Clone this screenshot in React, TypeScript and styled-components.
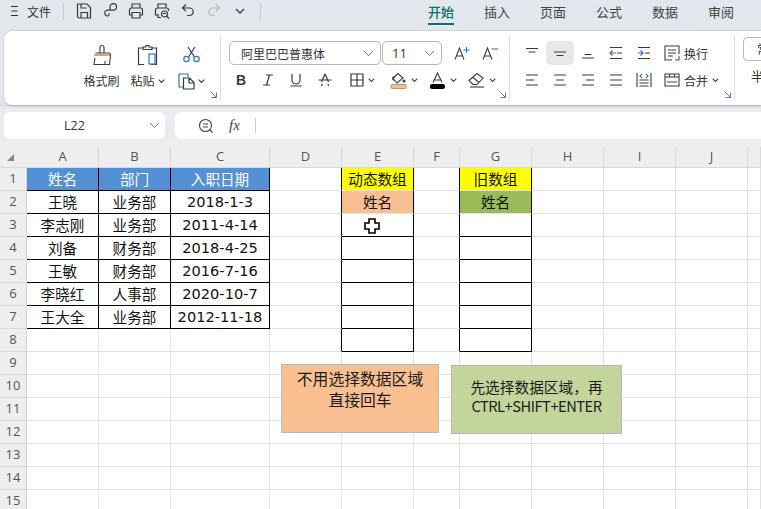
import React from "react";
import styled, { createGlobalStyle } from "styled-components";

const CJK = `"Noto Sans CJK SC", "Noto Sans", sans-serif`;
const INK = "#3a3a3a";
const BLUE = "#2f6fd6";

const Global = createGlobalStyle`
  html, body { margin: 0; padding: 0; background: #fff; }
  #root { width: 761px; height: 509px; overflow: hidden; }
  * { box-sizing: border-box; }
`;

const Page = styled.div`
  width: 761px;
  height: 509px;
  overflow: hidden;
  position: relative;
  display: flex;
  flex-direction: column;
  font-family: ${CJK};
  color: #222;
  background: #fff;
`;

const TitleBar = styled.div`
  height: 31px;
  flex: none;
  display: flex;
  align-items: center;
  background: #e2e6ed;
  padding: 0 0 9px 11px;
`;
const FileButton = styled.div`
  display: flex;
  align-items: center;
  gap: 9px;
  width: 52px;
  font-size: 12px;
  color: #333;
`;
const VBar = styled.span<{ $h?: number }>`
  width: 1px;
  height: ${(p) => p.$h ?? 17}px;
  background: #c6cad1;
  flex: none;
`;
const QuickIcons = styled.div`
  display: flex;
  align-items: center;
  width: 196px;
  padding-left: 7px;
`;
const QuickIcon = styled.span`
  width: 26px;
  display: flex;
  justify-content: center;
`;
const Tabs = styled.div`
  display: flex;
  align-self: flex-start;
  gap: 30px;
  margin-left: 167px;
`;
const Tab = styled.div<{ $on?: boolean }>`
  width: 26px;
  height: 25px;
  font-size: 13px;
  line-height: 23px;
  white-space: nowrap;
  font-weight: ${(p) => (p.$on ? 500 : 400)};
  color: ${(p) => (p.$on ? "#0e6f6c" : "#444")};
  border-bottom: ${(p) => (p.$on ? "2px solid #0e6f6c" : "none")};
`;

const Ribbon = styled.div`
  height: 74px;
  flex: none;
  background: #e2e6ed;
  padding-left: 4px;
`;
const RibbonCard = styled.div`
  height: 74px;
  background: #fff;
  border-radius: 8px 0 0 8px;
  box-shadow: 0 1px 2px rgba(90, 100, 120, 0.35), 0 -1px 0 #d3d6dc;
  display: flex;
  position: relative;
`;
const Group = styled.div<{ $w: number }>`
  position: relative;
  width: ${(p) => p.$w}px;
  flex: none;
  height: 100%;
  border-right: 1px solid #dcdfe4;
`;
const GroupFrame = styled.div`
  display: flex;
  height: 66px;
  margin-top: 4px;
`;
const PasteGroup = styled(Group)`
  padding-left: 76px;
  display: flex;
`;
const BigTool = styled.div<{ $w: number }>`
  width: ${(p) => p.$w}px;
  display: flex;
  flex-direction: column;
  align-items: center;
  font-size: 12px;
  color: #333;
  padding-top: 6px;
`;
const BigIconSlot = styled.div`
  height: 27px;
  display: flex;
  align-items: center;
  justify-content: center;
`;
const BigLabel = styled.div`
  margin-top: 4px;
  height: 18px;
  line-height: 18px;
  display: flex;
  align-items: center;
  gap: 3px;
  white-space: nowrap;
`;
const FontGroup = styled(Group)`
  padding: 6px 0 0 7px;
`;
const SelectRow = styled.div<{ $inset?: number }>`
  display: flex;
  align-items: center;
  height: 24px;
  margin-left: ${(p) => p.$inset ?? 0}px;
`;
const SelectBox = styled.div<{ $w: number; $pl: number }>`
  width: ${(p) => p.$w}px;
  height: 24px;
  border: 1px solid #b5b8bd;
  border-radius: 5px;
  background: #fff;
  display: flex;
  align-items: center;
  justify-content: space-between;
  padding: 0 6px 0 ${(p) => p.$pl}px;
  font-size: 12px;
  color: #333;
  margin-right: 1px;
`;
const SizeValue = styled.span`
  font-family: "Open Sans", sans-serif;
  font-size: 13px;
`;
const GrowTools = styled.div`
  display: flex;
  margin-left: 5px;
`;
const ToolRow = styled.div`
  display: flex;
  align-items: center;
  height: 24px;
  margin-top: 3px;
`;
const Tool = styled.span<{ $w: number; $on?: boolean }>`
  width: ${(p) => p.$w}px;
  height: 24px;
  flex: none;
  display: flex;
  align-items: center;
  justify-content: center;
  gap: 4px;
  border-radius: 5px;
  background: ${(p) => (p.$on ? "#e8e8e8" : "transparent")};
`;
const GlyphB = styled.span`
  font-family: "Liberation Sans", sans-serif;
  font-size: 14px;
  font-weight: 700;
  color: ${INK};
`;
const AlignGroup = styled(Group)`
  padding: 6px 0 0 8px;
`;
const TextTool = styled.div`
  display: flex;
  align-items: center;
  gap: 4px;
  font-size: 12px;
  color: #333;
  margin-left: 6px;
  white-space: nowrap;
`;
const Launcher = styled.svg`
  position: absolute;
  right: 3px;
  bottom: 3px;
`;
const NextGroup = styled.div`
  padding: 6px 0 0 8px;
  overflow: hidden;
  flex: 1;
`;
const ClipBox = styled.div`
  width: 40px;
  height: 24px;
  border: 1px solid #b5b8bd;
  border-right: 0;
  border-radius: 5px 0 0 5px;
  font-size: 12px;
  line-height: 22px;
  padding-left: 13px;
  color: #333;
`;
const ClipText = styled.div`
  font-size: 13px;
  margin-top: 5px;
  padding-left: 8px;
  color: #333;
`;

const FormulaBar = styled.div`
  height: 35px;
  flex: none;
  background: #e9ecf1;
  padding: 7px 0 1px 4px;
  display: flex;
  gap: 10px;
  box-shadow: inset 0 3px 3px -2px #cfd3da;
`;
const NameBox = styled.div`
  width: 161px;
  height: 27px;
  background: #fff;
  border-radius: 6px;
  display: flex;
  align-items: center;
  justify-content: space-between;
  padding: 0 5px 0 60px;
  font-family: "Open Sans", sans-serif;
  font-size: 12.5px;
  color: #333;
`;
const FxBox = styled.div`
  flex: 1;
  height: 27px;
  background: #fff;
  border-radius: 6px 0 0 6px;
  display: flex;
  align-items: center;
  padding-left: 23px;
`;
const FxGlyph = styled.span`
  font-family: "Liberation Serif", serif;
  font-style: italic;
  font-size: 15px;
  color: #444;
  margin: 0 10px 0 15px;
  width: 16px;
`;

const Sheet = styled.div`
  display: grid;
  grid-template-columns: 27px 72px 72px 99px 72px 72px 46px 72px 72px 72px 72px 13px;
  grid-template-rows: 28px repeat(15, 23px);
  flex: none;
`;
const ColHead = styled.div`
  background: #eeeeee;
  border-bottom: 1px solid #d8d8d8;
  padding-top: 7px;
  position: relative;
`;
const ColLabel = styled.div`
  height: 20px;
  border-right: 1px solid #d9d9d9;
  text-align: center;
  font-family: "Open Sans", sans-serif;
  font-size: 13px;
  line-height: 19px;
  color: #555;
`;
const Corner = styled.svg`
  position: absolute;
  left: 7px;
  top: 14px;
`;
const RowHead = styled.div`
  background: #eeeeee;
  border-right: 1px solid #d4d4d4;
  border-bottom: 1px solid #d9d9d9;
  font-family: "Open Sans", sans-serif;
  font-size: 13px;
  line-height: 21px;
  text-align: center;
  color: #555;
`;
const Cell = styled.div<{ $bg?: string; $fg?: string; $r?: boolean; $b?: boolean; $date?: boolean }>`
  background: ${(p) => p.$bg ?? "#fff"};
  color: ${(p) => p.$fg ?? "#111"};
  border-right: 1px solid ${(p) => (p.$r ? "#000" : "#e1e1e1")};
  border-bottom: 1px solid ${(p) => (p.$b ? "#000" : "#e1e1e1")};
  font-family: ${(p) => (p.$date ? `"DejaVu Sans", sans-serif` : CJK)};
  font-size: 14.6px;
  line-height: 22px;
  text-align: center;
  white-space: nowrap;
  overflow: hidden;
`;

const NoteBox = styled.div<{ $bg: string; $x: number; $y: number; $w: number; $pt: number; $fs: number; $lh: number }>`
  position: absolute;
  left: ${(p) => p.$x}px;
  top: ${(p) => p.$y}px;
  width: ${(p) => p.$w}px;
  height: 69px;
  background: ${(p) => p.$bg};
  border: 1px solid #b3b9bd;
  padding-top: ${(p) => p.$pt}px;
  font-size: ${(p) => p.$fs}px;
  line-height: ${(p) => p.$lh}px;
  text-align: center;
  color: #1c1c1c;
`;
const Keys = styled.span`
  letter-spacing: -0.5px;
`;
const CrossCursor = styled.svg`
  position: absolute;
  left: 364px;
  top: 218px;
`;

const Chevron = ({ size = 7, color = "#444" }: { size?: number; color?: string }) => (
  <svg width={size} height={size * 0.6} viewBox="0 0 10 6" fill="none">
    <path d="M1 1l4 4 4-4" stroke={color} strokeWidth="1.6" />
  </svg>
);
const SelectChevron = () => (
  <svg width="11" height="7" viewBox="0 0 11 7" fill="none">
    <path d="M1 1l4.5 4.5L10 1" stroke="#777" strokeWidth="1" />
  </svg>
);

const S = { fill: "none", stroke: INK, strokeWidth: 1.2 } as const;
const Ico = ({ children, w = 18, h = 18 }: { children: React.ReactNode; w?: number; h?: number }) => (
  <svg width={w} height={h} viewBox={`0 0 ${w} ${h}`} {...S}>
    {children}
  </svg>
);

const Save = () => (
  <Ico>
    <path d="M2.500 2h9.500l3.500 3.500V16H4a1.500 1.500 0 0 1-1.500-1.500z" />
    <path d="M6 2v4h5.500M6 16v-5.500h6.500V16" />
  </Ico>
);
const Link = () => (
  <Ico>
    <path d="M9 8V5a3.300 3.300 0 0 1 3.300-3.300A3.300 3.300 0 0 1 15.500 5a3.300 3.300 0 0 1-3.300 3.200H6.500a2.800 2.800 0 0 0-2.800 2.900A2.800 2.800 0 0 0 6.500 14a2 2 0 0 0 1.500-2.800" />
  </Ico>
);
const Printer = () => (
  <Ico>
    <path d="M5 6V2h8v4M5 13H2.500V8a2 2 0 0 1 2-2h9a2 2 0 0 1 2 2v5H13" />
    <path d="M5 10.500h8V16H5z" />
  </Ico>
);
const PrintPreview = () => (
  <Ico>
    <path d="M5 6V2h8v4M5 13H2.500V8a2 2 0 0 1 2-2h9a2 2 0 0 1 2 2v1M8 15.500H5V12" />
    <circle cx="11.500" cy="12" r="3" />
    <path d="M13.700 14.200l2.300 2.300M10 11.500h3" />
  </Ico>
);
const Undo = () => (
  <svg width="18" height="18" viewBox="0 0 18 18" fill="none" stroke={INK} strokeWidth="1.2">
    <path d="M7 2.500L3.500 6 7 9M3.500 6h7a3.700 3.700 0 0 1 3.700 3.700 3.700 3.700 0 0 1-3.700 3.800H8" />
  </svg>
);
const Redo = () => (
  <svg width="18" height="18" viewBox="0 0 18 18" fill="none" stroke="#b5b8bd" strokeWidth="1.2">
    <path d="M11 2.500L14.500 6 11 9M14.500 6h-7a3.700 3.700 0 0 0-3.700 3.700 3.700 3.700 0 0 0 3.700 3.800H10" />
  </svg>
);
const Brush = () => (
  <svg width="20" height="22" viewBox="0 0 20 22" fill="none" stroke={INK} strokeWidth="1.1">
    <path d="M8 9V3.500a2 2 0 0 1 4 0V9" />
    <path d="M3.500 9h13a2 2 0 0 1 2 2l-1 9.500H2l1-6.500" />
    <path d="M2 11h16" stroke="#a8622a" />
    <path d="M13 20v-3" />
  </svg>
);
const Paste = () => (
  <svg width="21" height="22" viewBox="0 0 21 22" fill="none" strokeWidth="1.2">
    <path d="M6 4H1.500v16.500H7M15 4h4.500v16.500H14" stroke={INK} />
    <path d="M6 5.500V3h3V1.500h3V3h3v2.500z" stroke={INK} />
    <rect x="12" y="10" width="6" height="10" stroke={BLUE} />
  </svg>
);
const Scissors = () => (
  <svg width="17" height="17" viewBox="0 0 17 17" fill="none" strokeWidth="1.2">
    <path d="M5 1l6.500 10M12 1L5.500 11" stroke={INK} />
    <circle cx="3.500" cy="13" r="2.700" stroke={BLUE} />
    <circle cx="13.500" cy="13" r="2.700" stroke={BLUE} />
  </svg>
);
const Copy = () => (
  <svg width="17" height="17" viewBox="0 0 17 17" fill="none" strokeWidth="1.2">
    <path d="M5 14H1V1h9v3" stroke={BLUE} />
    <path d="M5.500 5h6L16 9.500V16H5.500zM11 5v5h5" stroke={INK} />
  </svg>
);
const Italic = () => (
  <Ico w={14} h={14}>
    <path d="M5 2h7M2 12h7M8.500 2l-3 10" />
  </Ico>
);
const Underline = () => (
  <Ico w={14} h={14}>
    <path d="M3 1v6a4 4 0 0 0 8 0V1M1.500 13h11" />
  </Ico>
);
const Strike = () => (
  <Ico w={14} h={14}>
    <path d="M7 1L3.500 9M7 1l3.500 8M0.500 7h13M3.500 13l.5-2M10.500 13l-.5-2" />
  </Ico>
);
const Borders = () => (
  <Ico w={14} h={14}>
    <path d="M1 1h12v12H1zM7 1v12M1 7h12" />
  </Ico>
);
const Fill = () => (
  <svg width="17" height="17" viewBox="0 0 17 17" fill="none" stroke={INK} strokeWidth="1.1">
    <path d="M8 1.500L3 6.500l4 4.500 6-5z" />
    <path d="M5 5c-3-1-3 3-1 3" />
    <circle cx="14" cy="9" r="1" fill={INK} />
    <rect x="1" y="12.500" width="15" height="4" rx="1.500" fill="#f7bf7f" stroke="#b69a70" />
  </svg>
);
const FontColor = () => (
  <svg width="17" height="17" viewBox="0 0 17 17" fill="none" stroke={INK} strokeWidth="1.1">
    <path d="M4 10.500L8.500 1 13 10.500M5.500 8h6" />
    <rect x="1" y="12" width="15" height="5" rx="2" fill="#000" stroke="none" />
  </svg>
);
const Eraser = () => (
  <svg width="17" height="16" viewBox="0 0 17 16" fill="none" stroke={INK} strokeWidth="1.1">
    <path d="M1 8.500L9 1.500l6 4.500-6 6.500H5z" />
    <path d="M5 5.500l6 5" />
    <path d="M2 15h14" />
  </svg>
);
const FontUp = () => (
  <svg width="17" height="16" viewBox="0 0 17 16" fill="none" strokeWidth="1.1">
    <path d="M1 14.500L5.500 3 10 14.500M2.500 11h6" stroke={INK} />
    <path d="M9.500 5h6M12.500 2v6" stroke={BLUE} />
  </svg>
);
const FontDown = () => (
  <svg width="17" height="16" viewBox="0 0 17 16" fill="none" strokeWidth="1.1">
    <path d="M1 14.500L5.500 3 10 14.500M2.500 11h6" stroke={INK} />
    <path d="M9.500 4h6.500" stroke={BLUE} />
  </svg>
);
const Lines = ({ d }: { d: string }) => (
  <Ico w={14} h={14}>
    <path d={d} />
  </Ico>
);
const Indent = ({ out }: { out?: boolean }) => (
  <svg width="14" height="14" viewBox="0 0 14 14" fill="none" strokeWidth="1.1">
    <path d="M1 1.500h12M1 12.500h12M8 7h5" stroke={INK} />
    <path d={out ? "M7 7H1M3.500 4.500L1 7l2.500 2.500" : "M1 7h5M3.500 4.500L6 7 3.500 9.500"} stroke={BLUE} />
  </svg>
);
const Wrap = () => (
  <svg width="16" height="16" viewBox="0 0 16 16" fill="none" strokeWidth="1.1">
    <path d="M8 15H1V1h14v8" stroke={INK} />
    <path d="M4 5h8M4 8h8M4 11h5" stroke={INK} />
    <path d="M15 11v4h-4" stroke="#0e6f6c" />
  </svg>
);
const Merge = () => (
  <svg width="16" height="14" viewBox="0 0 16 14" fill="none" strokeWidth="1.1">
    <path d="M1 1h14v12H1zM5.500 1v3.500M10.500 1v3.500M1 4h14" stroke={INK} />
    <path d="M3 9h10" stroke="#0e6f6c" />
  </svg>
);
const Distribute = () => (
  <svg width="16" height="16" viewBox="0 0 16 16" fill="none" strokeWidth="1.1">
    <path d="M1 1v14M15 1v14M3.500 11h9M3.500 14h9M3.500 8h9" stroke={INK} />
    <path d="M6 2L4 4l2 2M10 2l2 2-2 2" stroke={BLUE} />
  </svg>
);
const GroupLauncher = () => (
  <Launcher width="7" height="7" viewBox="0 0 7 7" fill="none" stroke="#777" strokeWidth="1">
    <path d="M0.500 0.500l6 6M1.500 6.500h5v-5" />
  </Launcher>
);

const COLS = ["A", "B", "C", "D", "E", "F", "G", "H", "I", "J", ""];
const people = [
  ["姓名", "部门", "入职日期"],
  ["王晓", "业务部", "2018-1-3"],
  ["李志刚", "业务部", "2011-4-14"],
  ["刘备", "财务部", "2018-4-25"],
  ["王敏", "财务部", "2016-7-16"],
  ["李晓红", "人事部", "2020-10-7"],
  ["王大全", "业务部", "2012-11-18"],
];
const ROWS = Array.from({ length: 15 }, (_, i) => i);

function cellProps(r: number, c: number) {
  const inTable = r < 7 && c < 3;
  const inColumn = r < 8 && (c === 4 || c === 6);
  const leftOfColumn = r < 8 && (c === 3 || c === 5);
  const text = inTable ? people[r][c] : "";
  let bg: string | undefined;
  let fg: string | undefined;
  let label = text;
  if (inTable && r === 0) {
    bg = "#5490d6";
    fg = "#fff";
  }
  if (inColumn && r === 0) {
    bg = "#ffff00";
    label = c === 4 ? "动态数组" : "旧数组";
  }
  if (inColumn && r === 1) {
    bg = c === 4 ? "#f8c090" : "#9bbb59";
    label = "姓名";
  }
  return {
    label,
    $bg: bg,
    $fg: fg,
    $r: inTable || inColumn || leftOfColumn,
    $b: inTable || (inColumn && r >= 2),
    $date: inTable && c === 2 && r > 0,
  };
}

export default function App() {
  return (
    <Page>
      <Global />
      <TitleBar>
        <FileButton>
          <svg width="7" height="10" viewBox="0 0 7 10" stroke="#333" strokeWidth="1">
            <path d="M0 .5h7M.5 5h6M0 9.500h7" />
          </svg>
          文件
        </FileButton>
        <VBar />
        <QuickIcons>
          <QuickIcon><Save /></QuickIcon>
          <QuickIcon><Link /></QuickIcon>
          <QuickIcon><Printer /></QuickIcon>
          <QuickIcon><PrintPreview /></QuickIcon>
          <QuickIcon><Undo /></QuickIcon>
          <QuickIcon><Redo /></QuickIcon>
          <QuickIcon><Chevron size={10} color="#5a4a55" /></QuickIcon>
        </QuickIcons>
        <VBar />
        <Tabs>
          <Tab $on>开始</Tab>
          <Tab>插入</Tab>
          <Tab>页面</Tab>
          <Tab>公式</Tab>
          <Tab>数据</Tab>
          <Tab>审阅</Tab>
        </Tabs>
      </TitleBar>

      <Ribbon>
        <RibbonCard>
          <GroupFrame>
            <PasteGroup $w={217}>
              <BigTool $w={43}>
                <BigIconSlot><Brush /></BigIconSlot>
                <BigLabel>格式刷</BigLabel>
              </BigTool>
              <BigTool $w={49}>
                <BigIconSlot><Paste /></BigIconSlot>
                <BigLabel>粘贴 <Chevron /></BigLabel>
              </BigTool>
              <BigTool $w={38}>
                <BigIconSlot><Scissors /></BigIconSlot>
                <BigLabel><Copy /> <Chevron /></BigLabel>
              </BigTool>
              <GroupLauncher />
            </PasteGroup>
            <FontGroup $w={289}>
              <SelectRow $inset={1}>
                <SelectBox $w={152} $pl={11}>
                  阿里巴巴普惠体
                  <SelectChevron />
                </SelectBox>
                <SelectBox $w={60} $pl={9}>
                  <SizeValue>11</SizeValue>
                  <SelectChevron />
                </SelectBox>
                <GrowTools>
                  <Tool $w={28}><FontUp /></Tool>
                  <Tool $w={28}><FontDown /></Tool>
                </GrowTools>
              </SelectRow>
              <ToolRow>
                <Tool $w={26}><GlyphB>B</GlyphB></Tool>
                <Tool $w={27}><Italic /></Tool>
                <Tool $w={29}><Underline /></Tool>
                <Tool $w={29}><Strike /></Tool>
                <Tool $w={46}><Borders /><Chevron /></Tool>
                <Tool $w={38}><Fill /><Chevron /></Tool>
                <Tool $w={40}><FontColor /><Chevron /></Tool>
                <Tool $w={38}><Eraser /><Chevron /></Tool>
              </ToolRow>
              <GroupLauncher />
            </FontGroup>
            <AlignGroup $w={225}>
              <SelectRow>
                <Tool $w={28}><Lines d="M1 2.500h12M3.500 6h7" /></Tool>
                <Tool $w={28} $on><Lines d="M1 6h12M3.500 9.500h7" /></Tool>
                <Tool $w={28}><Lines d="M3.500 8.500h7M1 12h12" /></Tool>
                <Tool $w={28}><Indent out /></Tool>
                <Tool $w={28}><Indent /></Tool>
                <TextTool><Wrap />换行</TextTool>
              </SelectRow>
              <ToolRow>
                <Tool $w={28}><Lines d="M1 2h12M1 7h8M1 12h12" /></Tool>
                <Tool $w={28}><Lines d="M1 2h12M3 7h8M1 12h12" /></Tool>
                <Tool $w={28}><Lines d="M1 2h12M5 7h8M1 12h12" /></Tool>
                <Tool $w={28}><Lines d="M1 2h12M1 7h12M1 12h12" /></Tool>
                <Tool $w={28}><Distribute /></Tool>
                <TextTool><Merge />合并 <Chevron /></TextTool>
              </ToolRow>
              <GroupLauncher />
            </AlignGroup>
          </GroupFrame>
          <NextGroup>
            <ClipBox>常</ClipBox>
            <ClipText>半</ClipText>
          </NextGroup>
        </RibbonCard>
      </Ribbon>

      <FormulaBar>
        <NameBox>
          L22
          <SelectChevron />
        </NameBox>
        <FxBox>
          <svg width="16" height="16" viewBox="0 0 16 16" fill="none" stroke="#444" strokeWidth="1.1">
            <circle cx="7.500" cy="7.500" r="6" />
            <path d="M5 6h5M5 9h5M12 12l2.500 2.500" />
          </svg>
          <FxGlyph>fx</FxGlyph>
          <VBar $h={15} />
        </FxBox>
      </FormulaBar>

      <Sheet>
        <ColHead>
          <Corner width="7" height="7" viewBox="0 0 7 7">
            <path d="M7 0v7H0z" fill="#888" />
          </Corner>
        </ColHead>
        {COLS.map((c, i) => (
          <ColHead key={i}>
            <ColLabel>{c}</ColLabel>
          </ColHead>
        ))}
        {ROWS.map((r) => (
          <React.Fragment key={r}>
            <RowHead>{r + 1}</RowHead>
            {COLS.map((_, c) => {
              const { label, ...rest } = cellProps(r, c);
              return (
                <Cell key={c} {...rest}>
                  {label}
                </Cell>
              );
            })}
          </React.Fragment>
        ))}
      </Sheet>

      <NoteBox $bg="#f8c090" $x={281} $y={364} $w={158} $pt={3} $fs={15.8} $lh={21}>
        不用选择数据区域
        <br />
        直接回车
      </NoteBox>
      <NoteBox $bg="#c3d59a" $x={451} $y={365} $w={171} $pt={11} $fs={14.7} $lh={19}>
        先选择数据区域，再
        <br />
        <Keys>CTRL+SHIFT+ENTER</Keys>
      </NoteBox>
      <CrossCursor width="16" height="16" viewBox="0 0 16 16">
        <path d="M5 1h6v4h4v6h-4v4H5v-4H1V5h4z" fill="#fff" stroke="#000" strokeWidth="1.6" />
      </CrossCursor>
    </Page>
  );
}
